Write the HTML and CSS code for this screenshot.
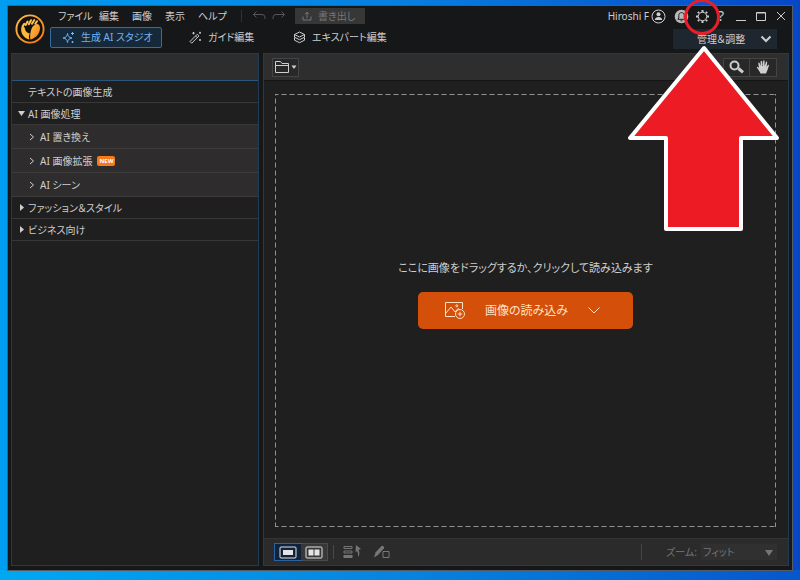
FILE: index.html
```html
<!DOCTYPE html>
<html lang="ja">
<head>
<meta charset="utf-8">
<meta name="viewport" content="width=device-width, initial-scale=1">
<title>生成 AI スタジオ</title>
<link rel="stylesheet" href="styles.css">
</head>
<body>
<div class="window">
  <header class="header">
    <svg class="logo" viewBox="0 0 30 30" aria-hidden="true">
      <defs>
        <linearGradient id="gold" x1="0" y1="0" x2="1" y2="1">
          <stop offset="0" stop-color="#ffc34d"/>
          <stop offset="1" stop-color="#f07a12"/>
        </linearGradient>
      </defs>
      <circle cx="15" cy="15" r="13.6" fill="#15100b" stroke="url(#gold)" stroke-width="1.900"/>
      <path d="M7 11.500C4.500 17 7.500 24 14.500 25.500c-1-2.500-.6-4.200.3-6-2.600-.6-4.300-2-4.800-4.500-.3-1.800-1.200-3-3-3.500z" fill="#ffb83c" stroke="none"/>
      <path d="M15.300 25.500C14.800 21 15.500 19 16 16.500c.5-3 2.500-5.500 5-6.300 2.600-.5 4.300 1.500 4 4.600-.5 5.400-4.300 9.700-9.700 10.700z" fill="url(#gold)" stroke="none"/>
      <path d="M9.200 9.800L7.800 12M12.600 7.500l-2 3.500M16 6.200l-2.200 4M19.300 6l-2.300 3.700M22 7.200l-1.700 2.500" stroke="#ffc34d" stroke-width="2" stroke-linecap="round"/>
    </svg>
    <div class="bar">
      <nav class="menu" aria-label="メニュー">
        <button class="menu-item menu-item-wide">ファイル</button>
        <button class="menu-item">編集</button>
        <button class="menu-item">画像</button>
        <button class="menu-item">表示</button>
        <button class="menu-item">ヘルプ</button>
      </nav>
      <div class="history">
        <button class="icon-button" aria-label="元に戻す"><svg width="14" height="12" viewBox="0 0 14 12"><path d="M4.500 1.500L1.500 4.500l3 3M1.500 4.500H10a3 3 0 0 1 3 3V9"/></svg></button>
        <button class="icon-button" aria-label="やり直し"><svg width="14" height="12" viewBox="0 0 14 12"><path d="M9.500 1.500l3 3-3 3M12.500 4.500H4a3 3 0 0 0-3 3V9"/></svg></button>
      </div>
      <button class="export"><svg width="10" height="10" viewBox="0 0 10 10"><path d="M1 5.500V9h8V5.500M5 7V1.200M3 3.200l2-2 2 2"/></svg>書き出し</button>
      <div class="account">
        <span class="user">Hiroshi F</span>
        <button class="icon-button" aria-label="アカウント"><svg width="15" height="15" viewBox="0 0 15 15"><circle cx="7.500" cy="7.500" r="6.500"/><circle class="solid" cx="7.500" cy="5.300" r="2"/><path class="solid" d="M3.800 11c0-4 7.400-4 7.400 0z"/></svg></button>
        <button class="icon-button" aria-label="お知らせ"><svg width="15" height="15" viewBox="0 0 15 15"><circle class="disc" cx="7.500" cy="7.500" r="6.800"/><path class="bell" d="M3.800 10.300h7.400L10.200 9V6.300c0-3.600-5.400-3.600-5.400 0V9zM6.500 11.800h2"/></svg></button>
        <button class="icon-button gear" aria-label="設定"><svg width="15" height="15" viewBox="0 0 15 15"><circle cx="7.500" cy="7.500" r="4.200"/><path class="teeth" d="M7.500 1v2M7.500 12v2M1 7.500h2M12 7.500h2M2.900 2.900l1.200 1.200M10.900 10.900l1.200 1.200M2.900 12.100l1.200-1.200M10.900 4.100l1.200-1.200"/></svg></button>
        <button class="icon-button help">?</button>
        <button class="icon-button" aria-label="最小化"><svg width="12" height="12" viewBox="0 0 12 12"><path d="M1 10.500h10"/></svg></button>
        <button class="icon-button" aria-label="最大化"><svg width="12" height="12" viewBox="0 0 12 12"><path d="M1.500 2.500h9v8h-9zM1.500 3h9"/></svg></button>
        <button class="icon-button" aria-label="閉じる"><svg width="12" height="12" viewBox="0 0 12 12"><path d="M2 2l8 8M10 2l-8 8"/></svg></button>
      </div>
    </div>
    <div class="modes">
      <button class="mode mode-active"><svg width="13" height="13" viewBox="0 0 13 13"><path d="M5.500 2.500C6 5.500 7 6.500 10 7c-3 .5-4 1.500-4.500 4.500C5 8.500 4 7.500 1 7c3-.5 4-1.500 4.500-4.500z"/><path d="M10.500 1v3M9 2.500h3M10.500 10v2M9.500 11h2"/></svg>生成 AI スタジオ</button>
      <button class="mode mode-guide"><svg width="13" height="13" viewBox="0 0 13 13"><path d="M1 10.500L8.300 3.200l1.700 1.700L2.700 12.200zM6.600 4.900l1.700 1.700M4.500 1v2.400M3.300 2.200h2.400M11 .8v2M10 1.800h2M11 8v2M10 9h2"/></svg>ガイド編集</button>
      <button class="mode mode-expert"><svg width="13" height="13" viewBox="0 0 13 13"><path d="M6.500 1l5 2.500-5 2.500-5-2.500zM1.500 3.500v2.700l5 2.500 5-2.500V3.500M1.500 6.500v2.700l5 2.500 5-2.500V6.500"/></svg>エキスパート編集</button>
      <div class="manage">
        <select aria-label="表示モード"><option>管理＆調整</option></select>
        <svg width="12" height="8" viewBox="0 0 12 8" aria-hidden="true"><path d="M1.500 1.500L6 6l4.500-4.500"/></svg>
      </div>
    </div>
  </header>

  <div class="workspace">
    <aside class="sidebar">
      <div class="sidebar-head"></div>
      <ul class="tree">
        <li><button class="node">テキストの画像生成</button></li>
        <li>
          <button class="node"><svg class="arrow" viewBox="0 0 7 7"><path d="M0 1h7L3.500 6z"/></svg>AI 画像処理</button>
          <ul class="branch">
            <li><button class="leaf"><svg class="chevron" viewBox="0 0 6 8"><path d="M1 1l3.500 3L1 7"/></svg>AI 置き換え</button></li>
            <li><button class="leaf"><svg class="chevron" viewBox="0 0 6 8"><path d="M1 1l3.500 3L1 7"/></svg>AI 画像拡張<span class="new">NEW</span></button></li>
            <li><button class="leaf"><svg class="chevron" viewBox="0 0 6 8"><path d="M1 1l3.500 3L1 7"/></svg>AI シーン</button></li>
          </ul>
        </li>
        <li><button class="node"><svg class="arrow" viewBox="0 0 7 7"><path d="M2 0v7l4-3.500z"/></svg>ファッション＆スタイル</button></li>
        <li><button class="node"><svg class="arrow" viewBox="0 0 7 7"><path d="M2 0v7l4-3.500z"/></svg>ビジネス向け</button></li>
      </ul>
    </aside>

    <main class="editor">
      <div class="toolbar">
        <button class="tool" aria-label="フォルダーを開く"><svg width="23" height="14" viewBox="0 0 23 14"><path d="M1.500 12.500v-11h5l1.500 2h6.500v9zM1.500 5.500h13"/><path class="solid" d="M17.500 5.500h5L20 9z"/></svg></button>
        <div class="tool-group">
          <button class="tool" aria-label="ズーム"><svg width="16" height="14" viewBox="0 0 16 14"><circle class="lens" cx="5.500" cy="5.500" r="4"/><path class="handle" d="M9.500 8.500l4.500 3.800"/></svg></button>
          <button class="tool" aria-label="手のひら"><svg width="14" height="14" viewBox="0 0 14 14"><path class="solid" d="M4.500 13.500C3.500 11 2 9 .8 7.500c0-1 1-1 2.200.5L2.300 3.200c.2-1 1.200-.8 1.400 0L4.700 6 4.600 1.500c.2-1 1.300-1 1.500 0L6.600 6 7.200.8c.3-.8 1.300-.7 1.400.2L8.500 6l1.500-4c.4-.7 1.300-.4 1.200.4L10.500 7l1.300-2c.7-.6 1.400-.1 1.100.7L11.500 10 10 13.500z"/></svg></button>
        </div>
      </div>

      <div class="canvas">
        <div class="dropzone">
          <p class="hint">ここに画像をドラッグするか、クリックして読み込みます</p>
          <button class="load">
            <svg width="22" height="19" viewBox="0 0 22 19" aria-hidden="true"><path d="M11 15.500H1.500v-14h17V8M2 12l5-6 4 5 3-3.500 2 1.500"/><circle cx="12.800" cy="4.800" r="1"/><circle cx="16" cy="13" r="4.500"/><path d="M16 10.700v4.600M13.700 13h4.600"/></svg>
            <span>画像の読み込み</span>
            <svg width="14" height="9" viewBox="0 0 14 9" aria-hidden="true"><path d="M1.500 1.500L7 7l5.500-5.500"/></svg>
          </button>
        </div>
      </div>

      <footer class="statusbar">
        <div class="views">
          <button class="view view-active" aria-label="1 画面表示"><svg width="18" height="13" viewBox="0 0 18 13"><rect x="1" y="1" width="16" height="11" rx="1"/><path class="solid" d="M4 4h10v5H4z"/></svg></button>
          <button class="view" aria-label="2 画面表示"><svg width="18" height="13" viewBox="0 0 18 13"><rect x="1" y="1" width="16" height="11" rx="1"/><path class="solid" d="M3.500 3.500h5v6h-5zM9.500 3.500h5v6h-5z"/></svg></button>
        </div>
        <div class="edits">
          <button class="icon-button" aria-label="並べ替え"><svg width="19" height="14" viewBox="0 0 19 14"><path d="M1 1.500h8v2H1zM1 6h8v2H1z"/><path class="solid" d="M.5 10h9v3h-9zM13 0l5 4-2.500.7C17 7.500 16.500 10 15 12c0-3 0-5-1-6l-1.500 1.500z"/></svg></button>
          <button class="icon-button" aria-label="マスク"><svg width="18" height="14" viewBox="0 0 18 14"><path class="solid" d="M1 12.500l1.500-5L8.500 1c1-1 3.500 1 2.500 2.300L5 10z"/><path d="M10 6.500h6v6h-6z"/></svg></button>
        </div>
        <div class="zoom">
          <label for="zoom">ズーム:</label>
          <div class="zoom-box">
            <select id="zoom"><option>フィット</option></select>
            <svg width="8" height="7" viewBox="0 0 8 7" aria-hidden="true"><path d="M0 1h8L4 7z"/></svg>
          </div>
        </div>
      </footer>
    </main>
  </div>
</div>

<svg class="callout" width="156" height="234" viewBox="625 0 156 234" aria-hidden="true">
  <circle cx="702" cy="17" r="16.500"/>
  <path d="M704 48L630 138h36v91h75v-91h36z"/>
</svg>
</body>
</html>
```
FILE: styles.css
```css
* {
  box-sizing: border-box;
}

body {
  margin: 0;
  height: 100vh;
  padding: 5px 7px 9px;
  background:
    linear-gradient(to right, #00a8f2, #0784df 50%, #0657cb) bottom / 100% 10px no-repeat,
    linear-gradient(to right, #009df0, #087fe0 50%, #0647c6);
  color: #cecece;
  font-family: "Noto Sans", "Noto Sans CJK JP", sans-serif;
  font-size: 10px;
  line-height: 16px;
  font-feature-settings: "palt";
}

button,
select {
  margin: 0;
  padding: 0;
  border: 0;
  background: none;
  color: inherit;
  font: inherit;
  font-feature-settings: inherit;
  appearance: none;
}

button {
  display: flex;
  align-items: center;
  white-space: nowrap;
}

ul,
p {
  margin: 0;
  padding: 0;
  list-style: none;
}

svg {
  flex: none;
  fill: none;
  stroke: currentColor;
}

svg .solid {
  fill: currentColor;
  stroke: none;
}

.window {
  display: flex;
  flex-direction: column;
  height: 100%;
  padding: 0 3px 4px;
  border: 1px solid #555b62;
  background: #161718;
}

/* Header */

.header {
  display: grid;
  grid-template-columns: 39px 1fr;
  grid-template-rows: 20px 22px;
  padding-bottom: 5px;
}

.logo {
  grid-row: 1 / 3;
  width: 30px;
  height: 30px;
  margin: 8px 0 0 4px;
}

.bar {
  display: flex;
  align-items: center;
  padding-left: 8px;
}

.menu {
  display: flex;
}

.menu-item {
  width: 33px;
}

.menu-item-wide {
  width: 41px;
}

.history {
  display: flex;
  gap: 6px;
  margin-left: 10px;
  padding-left: 10px;
  border-left: 1px solid #303030;
  color: #565656;
}

.export {
  gap: 6px;
  width: 70px;
  height: 16px;
  margin-left: 9px;
  padding-left: 7px;
  background: #373737;
  color: #767676;
}

.account {
  display: flex;
  align-items: center;
  gap: 8px;
  margin: 0 2px 0 auto;
}

.user {
  margin-right: -6px;
}

.gear {
  margin-left: -2px;
}

.help {
  width: 9px;
  font-size: 14px;
}

.teeth {
  stroke-width: 2;
}

.disc {
  fill: #b9b9b9;
  stroke: none;
}

.bell {
  stroke: #202020;
  stroke-width: 1;
}

.modes {
  display: flex;
  align-items: center;
}

.mode {
  gap: 6px;
  height: 21px;
}

.mode-active {
  width: 112px;
  padding-left: 11px;
  border: 1px solid #356c9b;
  border-radius: 2px;
  background: #16293a;
  color: #73b3ee;
}

.mode-guide {
  width: 104px;
  padding-left: 27px;
}

.mode-expert {
  padding-left: 27px;
}

.manage {
  position: relative;
  width: 104px;
  margin: 4px 12px 0 auto;
}

.manage select {
  display: block;
  width: 100%;
  height: 20px;
  padding-left: 24px;
  background: #1e2730;
}

.manage svg {
  position: absolute;
  top: 6px;
  right: 5px;
  stroke-width: 2;
}

/* Panels */

.workspace {
  display: grid;
  grid-template-columns: 248px minmax(0, 1fr);
  gap: 4px;
  flex: 1;
  min-height: 0;
}

.sidebar,
.editor {
  border: 1px solid #203c54;
  background: #1f1f1f;
}

.sidebar-head {
  height: 27px;
  border-bottom: 1px solid #2b557a;
  background: #2d2d2d;
}

.node,
.leaf {
  position: relative;
  width: 100%;
  height: 22px;
  padding-left: 16px;
  border-bottom: 1px solid #373737;
}

.leaf {
  gap: 5px;
  height: 24px;
  padding-left: 17px;
  border-color: #3d3b3b;
}

.branch {
  background: #2e2c2c;
}

.arrow {
  position: absolute;
  left: 6px;
  width: 7px;
  height: 7px;
  fill: currentColor;
  stroke: none;
}

.chevron {
  width: 6px;
  height: 8px;
}

.new {
  padding: 0 2px;
  border-radius: 2px;
  background: #f47a1b;
  color: #fff;
  font-size: 6px;
  font-weight: 700;
  line-height: 10px;
}

.editor {
  display: flex;
  flex-direction: column;
}

.toolbar {
  display: flex;
  justify-content: space-between;
  align-items: center;
  height: 27px;
  padding: 0 11px 0 8px;
  border-bottom: 1px solid #151515;
  background: #2e2e2e;
}

.tool {
  justify-content: center;
  width: 27px;
  height: 19px;
  border: 1px solid #444;
  background: #282828;
}

.tool-group {
  display: flex;
}

.tool + .tool {
  border-left: 0;
}

.lens {
  stroke-width: 2;
}

.handle {
  stroke-width: 3;
}

.canvas {
  display: flex;
  flex: 1;
  padding: 13px 12px 11px 11px;
}

.dropzone {
  display: flex;
  flex: 1;
  flex-direction: column;
  align-items: center;
  justify-content: center;
  gap: 16px;
  padding-bottom: 32px;
  background:
    linear-gradient(to right, #929292 5px, transparent 5px) top / 8px 1px repeat-x,
    linear-gradient(to right, #929292 5px, transparent 5px) bottom / 8px 1px repeat-x,
    linear-gradient(#929292 5px, transparent 5px) left / 1px 8px repeat-y,
    linear-gradient(#929292 5px, transparent 5px) right / 1px 8px repeat-y;
}

.hint {
  font-size: 11px;
}

.load {
  width: 215px;
  height: 37px;
  padding: 0 32px 0 26px;
  justify-content: space-between;
  border-radius: 5px;
  background: #d44f09;
  color: #ffe3c4;
  font-size: 12px;
}

.statusbar {
  display: flex;
  align-items: center;
  height: 27px;
  padding: 0 11px 0 10px;
  border-top: 1px solid #343434;
  background: #2b2b2b;
  color: #767676;
}

.views {
  display: flex;
  border: 1px solid #4b4b4b;
  color: #e4e4e4;
}

.view {
  justify-content: center;
  width: 26px;
  height: 16px;
  background: #383838;
}

.view-active {
  outline: 1px solid #2863a6;
  background: #10233b;
}

.edits {
  display: flex;
  gap: 11px;
  margin-left: 5px;
  padding-left: 9px;
  border-left: 1px solid #494949;
}

.zoom {
  display: flex;
  align-items: center;
  gap: 4px;
  margin-left: auto;
  padding-left: 24px;
  border-left: 1px solid #454545;
}

.zoom-box {
  position: relative;
  width: 76px;
}

.zoom select {
  display: block;
  width: 100%;
  height: 16px;
  padding-left: 2px;
  background: #303030;
}

.zoom svg {
  position: absolute;
  top: 5px;
  right: 4px;
  fill: currentColor;
  stroke: none;
}

/* Highlight over the settings button */

.callout {
  position: absolute;
  top: 0;
  right: 19px;
  pointer-events: none;
}

.callout circle {
  stroke: #e81f2b;
  stroke-width: 3;
}

.callout path {
  fill: #ed1c24;
  stroke: #fff;
  stroke-width: 4;
  stroke-linejoin: round;
}
```
